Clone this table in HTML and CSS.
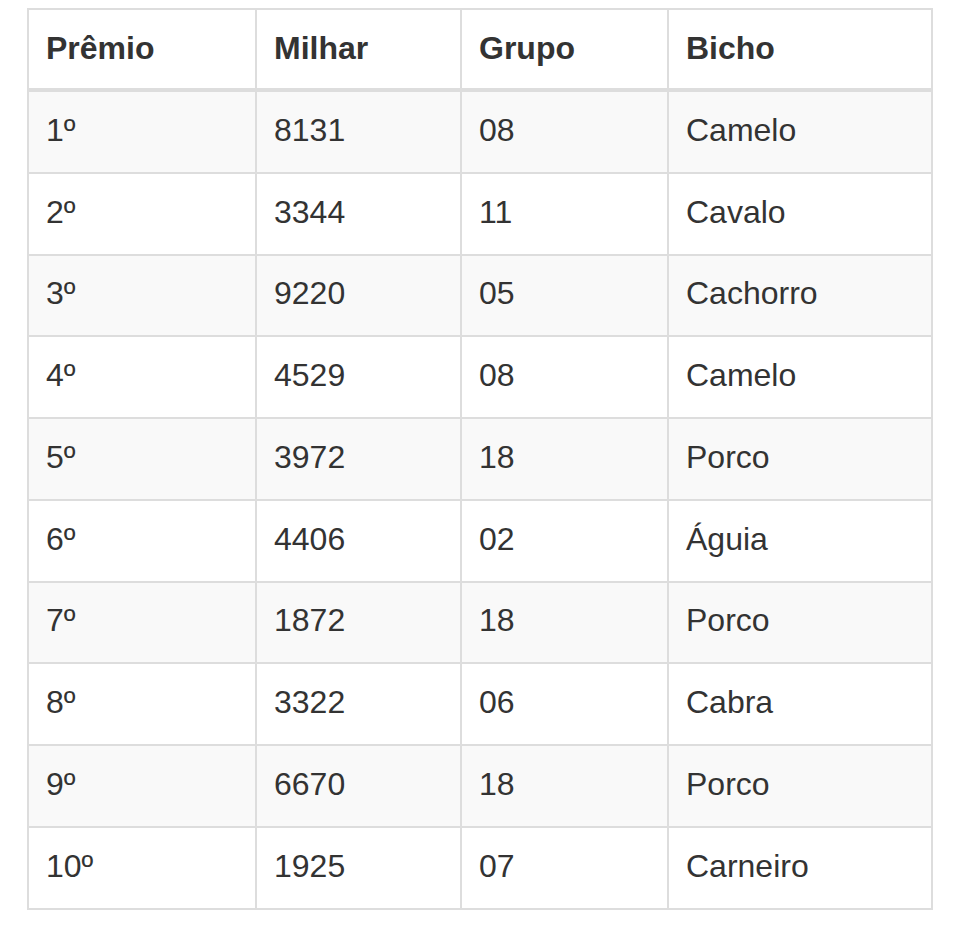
FILE: index.html
```html
<!DOCTYPE html>
<html lang="pt">
<head>
<meta charset="utf-8">
<title>Resultado</title>
<link rel="stylesheet" href="styles.css">
</head>
<body>
<table class="results">
  <colgroup>
    <col class="c1"><col class="c2"><col class="c3"><col class="c4">
  </colgroup>
  <thead>
    <tr><th>Prêmio</th><th>Milhar</th><th>Grupo</th><th>Bicho</th></tr>
  </thead>
  <tbody>
    <tr><td>1º</td><td>8131</td><td>08</td><td>Camelo</td></tr>
    <tr><td>2º</td><td>3344</td><td>11</td><td>Cavalo</td></tr>
    <tr><td>3º</td><td>9220</td><td>05</td><td>Cachorro</td></tr>
    <tr><td>4º</td><td>4529</td><td>08</td><td>Camelo</td></tr>
    <tr><td>5º</td><td>3972</td><td>18</td><td>Porco</td></tr>
    <tr><td>6º</td><td>4406</td><td>02</td><td>Águia</td></tr>
    <tr><td>7º</td><td>1872</td><td>18</td><td>Porco</td></tr>
    <tr><td>8º</td><td>3322</td><td>06</td><td>Cabra</td></tr>
    <tr><td>9º</td><td>6670</td><td>18</td><td>Porco</td></tr>
    <tr><td>10º</td><td>1925</td><td>07</td><td>Carneiro</td></tr>
  </tbody>
</table>
</body>
</html>
```
FILE: styles.css
```css
html, body {
  margin: 0;
  padding: 0;
  background: #fff;
}
body {
  padding: 8px 0 0 27px;
  font-family: "Liberation Sans", Arial, sans-serif;
  color: #333;
}
.results {
  border-collapse: collapse;
  table-layout: fixed;
  width: 904px;
  border: 2px solid #ddd;
  font-size: 32px;
}
.c1 { width: 228px; }
.c2 { width: 205px; }
.c3 { width: 207px; }
.c4 { width: 264px; }
.results th,
.results td {
  border: 2px solid #ddd;
  padding: 18px 17px;
  line-height: 44px;
  text-align: left;
  vertical-align: top;
}
.results th {
  font-weight: bold;
  padding-top: 16px;
  padding-bottom: 18px;
  border-bottom: 4px solid #ddd;
}
.results td {
  padding-top: 15.75px;
  padding-bottom: 20px;
}
.results tbody tr:nth-child(odd) {
  background: #f9f9f9;
}
```
